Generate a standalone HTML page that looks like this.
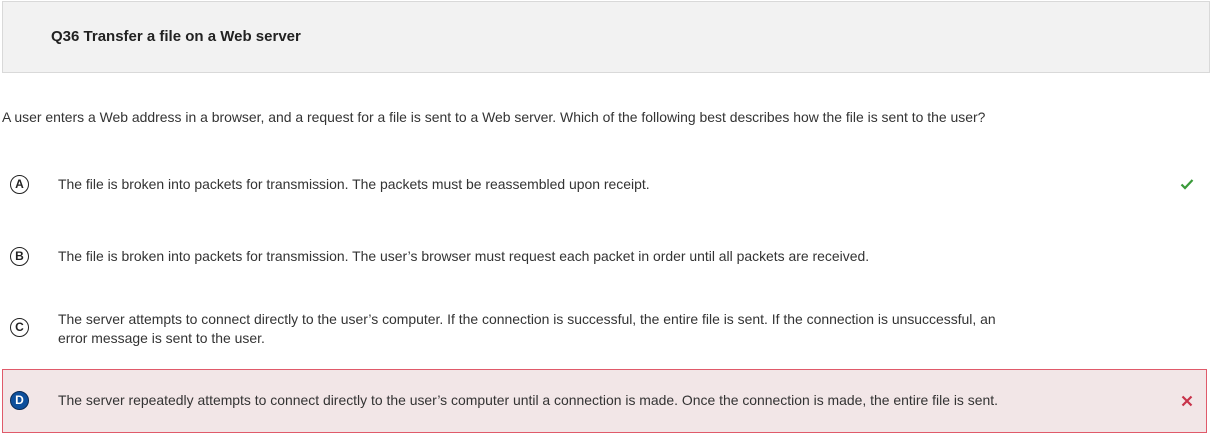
<!DOCTYPE html><html><head><style>
body{margin:0;width:1210px;height:438px;background:#fff;font-family:"Liberation Sans",Arial,sans-serif;color:#333;position:relative;overflow:hidden}
.hd{position:absolute;left:2px;top:1px;width:1206px;height:70px;background:#f2f2f2;border:1px solid #d9d9d9}
.hd span{position:absolute;left:48px;top:26px;font-size:15px;font-weight:bold;color:#222}
.t{position:absolute;font-size:13.95px;line-height:19px;white-space:nowrap}
.c{position:absolute;left:10px;width:17px;height:17px;border:1.6px solid #222;border-radius:50%;font-size:12px;font-weight:bold;text-align:center;line-height:17px;color:#222}
.d{position:absolute;left:2px;top:369px;width:1203px;height:62px;background:#f2e6e7;border:1px solid #e05a6a}
</style></head><body>
<div class="hd"><span>Q36 Transfer a file on a Web server</span></div>
<div class="t" style="left:2px;top:108px">A user enters a Web address in a browser, and a request for a file is sent to a Web server. Which of the following best describes how the file is sent to the user?</div>
<div class="c" style="top:175px">A</div>
<div class="t" style="left:58px;top:175px">The file is broken into packets for transmission. The packets must be reassembled upon receipt.</div>
<svg style="position:absolute;left:1180px;top:178px" width="14" height="12" viewBox="0 0 14 12"><path d="M1.5 6.5l3.5 3.5 7.5-8" stroke="#3a9a3a" stroke-width="2.2" fill="none"/></svg>
<div class="c" style="top:247px">B</div>
<div class="t" style="left:58px;top:247px">The file is broken into packets for transmission. The user’s browser must request each packet in order until all packets are received.</div>
<div class="c" style="top:318px">C</div>
<div class="t" style="left:58px;top:310px">The server attempts to connect directly to the user’s computer. If the connection is successful, the entire file is sent. If the connection is unsuccessful, an<br>error message is sent to the user.</div>
<div class="d"></div>
<div class="c" style="top:391px;background:#0d4f9c;border-color:#0a2a55;color:#fff">D</div>
<div class="t" style="left:58px;top:391px">The server repeatedly attempts to connect directly to the user’s computer until a connection is made. Once the connection is made, the entire file is sent.</div>
<svg style="position:absolute;left:1181px;top:395px" width="12" height="12" viewBox="0 0 12 12"><path d="M1.5 1.5l9 9M10.5 1.5l-9 9" stroke="#c8334a" stroke-width="2.2"/></svg>
</body></html>
